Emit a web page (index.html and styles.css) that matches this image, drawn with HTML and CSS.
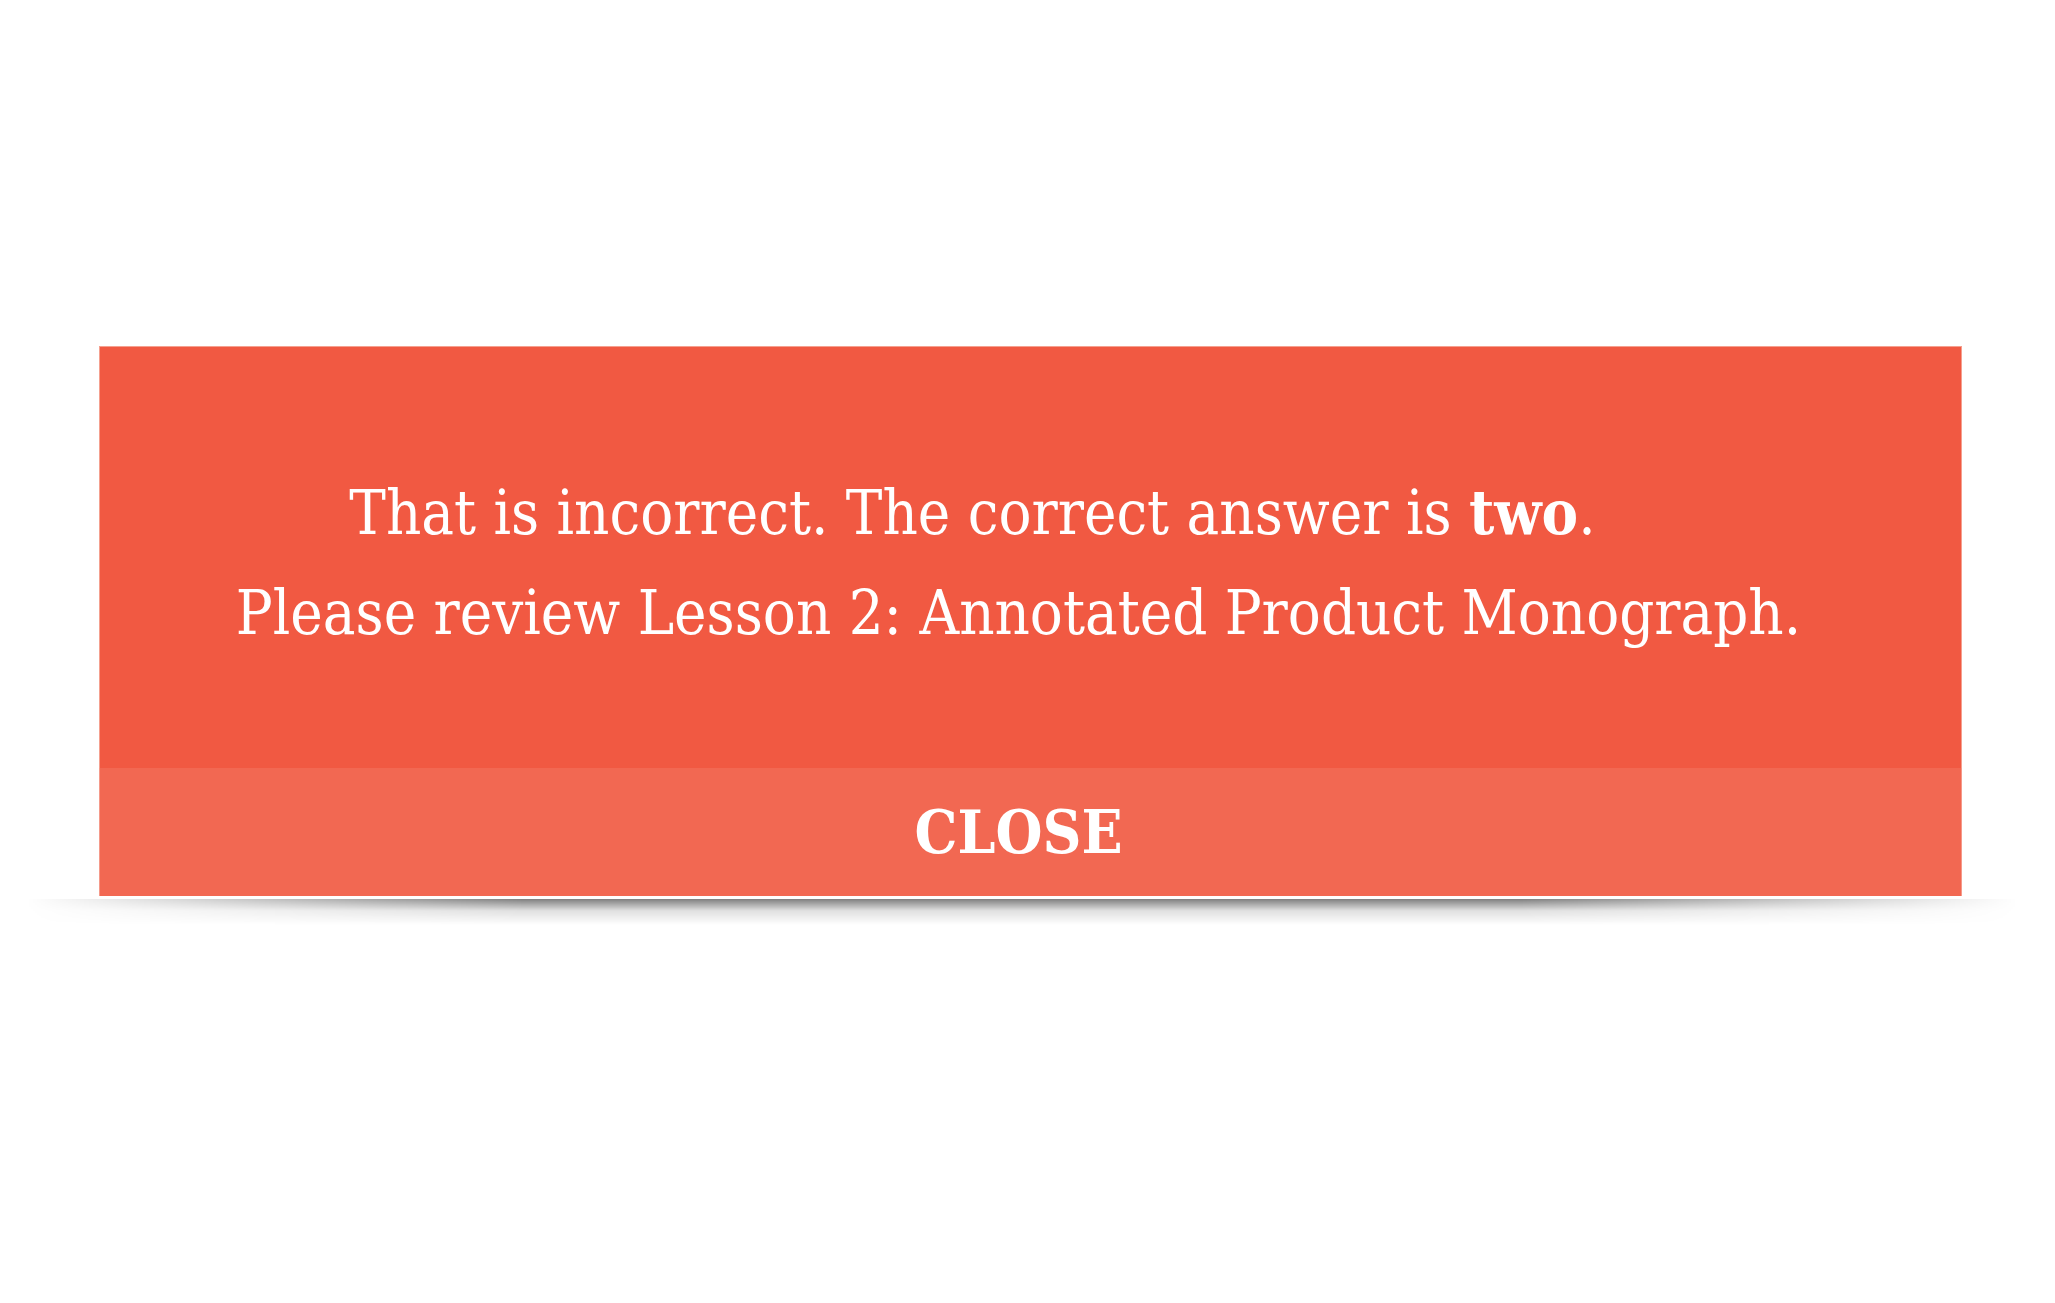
FILE: index.html
```html
<!DOCTYPE html>
<html lang="en">
<head>
<meta charset="utf-8">
<title>Feedback</title>
<link rel="stylesheet" href="styles.css">
</head>
<body>
<div class="stage">
  <div class="dialog">
    <div class="message">
      <p class="line line-first">That is incorrect. The correct answer is <strong>two</strong>.</p>
      <p class="line">Please review Lesson 2: Annotated Product Monograph.</p>
    </div>
    <div class="close">CLOSE</div>
  </div>
  <div class="shadow"></div>
</div>
</body>
</html>
```

FILE: styles.css
```css
html, body {
  margin: 0;
  padding: 0;
  background: #ffffff;
}

.stage {
  padding: 346px 0 0 99px;
  width: 1863px;
}

.dialog {
  display: flex;
  flex-direction: column;
  font-family: "DejaVu Serif", serif;
  font-stretch: condensed;
  color: #ffffff;
}

.message {
  height: 422px;
  background: #f15942;
  display: flex;
  flex-direction: column;
  justify-content: center;
  align-items: center;
  padding: 12px 24px 0 0;
  box-sizing: border-box;
  box-shadow: inset 0 1px 0 #f5a08f, inset 1px 0 0 #f5a08f, inset -1px 0 0 #f5a08f;
}

.line {
  margin: 0;
  font-size: 61px;
  line-height: 100px;
  white-space: nowrap;
}

.line-first {
  padding-right: 92px;
}

.line strong {
  font-weight: bold;
}

.close {
  height: 128px;
  background: #f26852;
  display: flex;
  align-items: center;
  justify-content: center;
  padding-right: 24px;
  font-size: 60px;
  font-weight: bold;
  box-shadow: inset 1px 0 0 #f59a8a, inset -1px 0 0 #f59a8a;
}

.shadow {
  height: 26px;
  margin: 3px -56px 0 -73px;
  background: linear-gradient(to bottom, rgba(0,0,0,0.5), rgba(0,0,0,0.12) 45%, rgba(0,0,0,0));
  -webkit-mask-image: linear-gradient(to right, transparent, #000 25%, #000 75%, transparent);
  mask-image: linear-gradient(to right, transparent, #000 25%, #000 75%, transparent);
}
```
